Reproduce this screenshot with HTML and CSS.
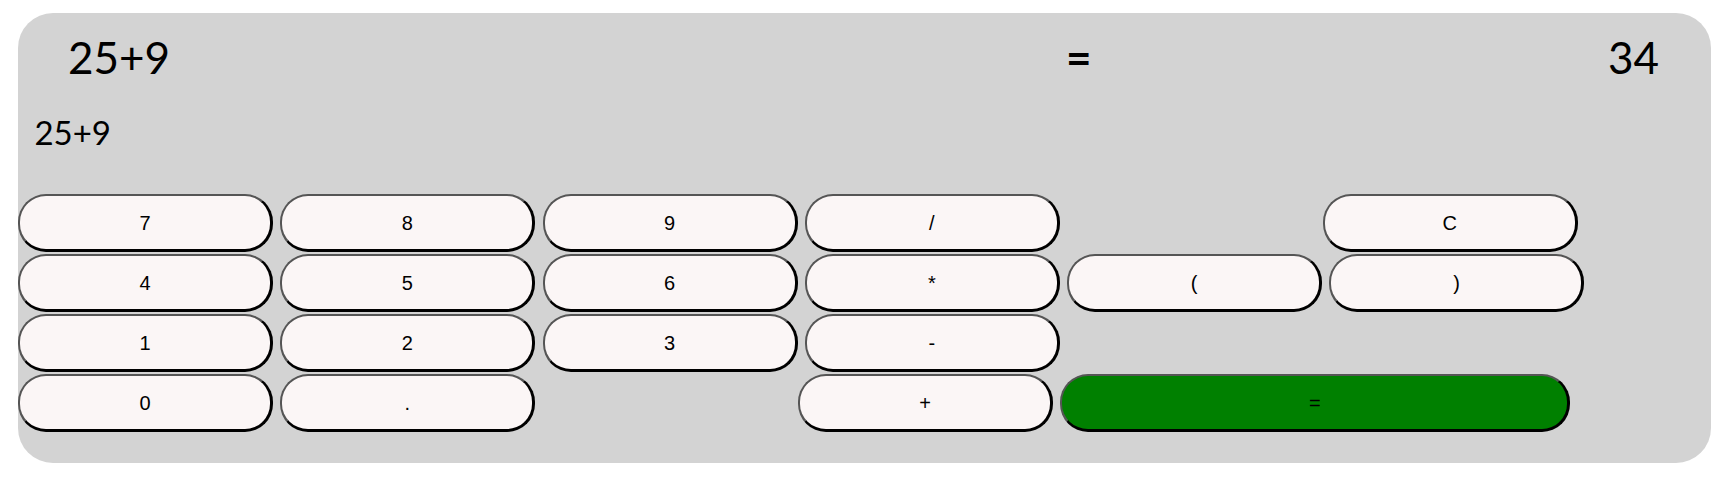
FILE: index.html
```html
<!DOCTYPE html>
<html lang="en">
<head>
<meta charset="utf-8">
<title>Calculator</title>
<link rel="stylesheet" href="styles.css">
</head>
<body>
<div class="calc">
  <div class="display-top">
    <span class="expr">25+9</span>
    <span class="eq">=</span>
    <span class="result">34</span>
  </div>
  <div class="display-input">25+9</div>
  <div class="keys">
    <div class="row">
      <button class="key">7</button>
      <button class="key">8</button>
      <button class="key">9</button>
      <button class="key">/</button>
      <span class="spacer"></span>
      <button class="key">C</button>
    </div>
    <div class="row">
      <button class="key">4</button>
      <button class="key">5</button>
      <button class="key">6</button>
      <button class="key">*</button>
      <button class="key">(</button>
      <button class="key">)</button>
    </div>
    <div class="row">
      <button class="key">1</button>
      <button class="key">2</button>
      <button class="key">3</button>
      <button class="key">-</button>
    </div>
    <div class="row">
      <button class="key">0</button>
      <button class="key">.</button>
      <span class="spacer"></span>
      <button class="key">+</button>
      <button class="key key-equals">=</button>
    </div>
  </div>
</div>
</body>
</html>
```

FILE: styles.css
```css
html, body {
  margin: 0;
  padding: 0;
  background: #ffffff;
}

.calc {
  margin: 13px 0 0 18px;
  width: 1693px;
  height: 450px;
  box-sizing: border-box;
  background: #d3d3d3;
  border-radius: 35px;
}

.display-top {
  display: grid;
  grid-template-columns: 998px auto 1fr;
  padding: 17.6px 52px 0 50px;
  font-family: Lato, "Open Sans", sans-serif;
  font-size: 44px;
  line-height: normal;
  color: #000;
}

.eq {
  font-weight: 700;
}

.result {
  text-align: right;
}

.display-input {
  margin-top: 29.7px;
  padding-left: 16.4px;
  font-family: Lato, "Open Sans", sans-serif;
  font-size: 33px;
  line-height: normal;
  color: #000;
}

.keys {
  margin-top: 41.6px;
  display: flex;
  flex-direction: column;
  gap: 2px;
}

.row {
  display: flex;
  gap: 7.3px;
}

.key {
  flex: none;
  width: 255px;
  height: 58px;
  box-sizing: border-box;
  margin: 0;
  padding: 2px 0 0;
  border-style: solid;
  border-width: 2.5px 3px 3px 2.5px;
  border-color: #555555 #000000 #000000 #555555;
  border-radius: 28px;
  background: #fbf6f6;
  font-family: "Liberation Sans", Arial, sans-serif;
  font-size: 20px;
  color: #000;
}

.key-equals {
  width: 510px;
  background: #008000;
}

.spacer {
  flex: none;
  width: 248.2px;
}
```
